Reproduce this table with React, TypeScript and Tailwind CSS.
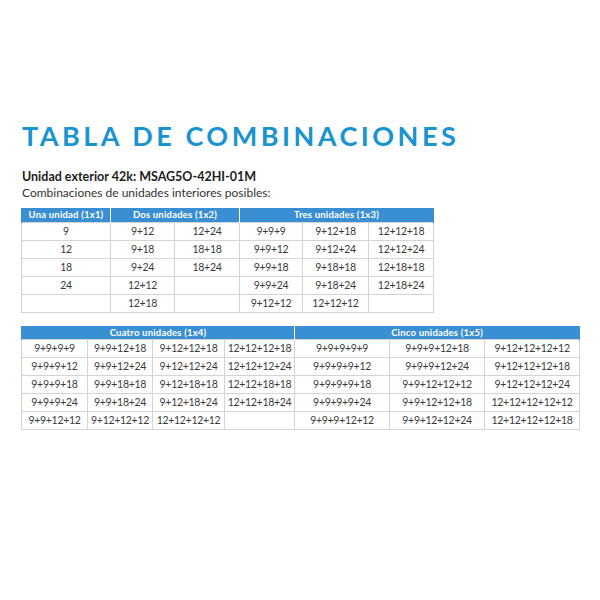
import React from "react";

const top = {
  widths: [89, 64, 65, 63, 66, 65],
  rows: [
    ["9", "9+12", "12+24", "9+9+9", "9+12+18", "12+12+18"],
    ["12", "9+18", "18+18", "9+9+12", "9+12+24", "12+12+24"],
    ["18", "9+24", "18+24", "9+9+18", "9+18+18", "12+18+18"],
    ["24", "12+12", "", "9+9+24", "9+18+24", "12+18+24"],
    ["", "12+18", "", "9+12+12", "12+12+12", ""],
  ],
};

const bottom = {
  widths: [66, 65, 72, 70, 95, 95, 95],
  rows: [
    ["9+9+9+9", "9+9+12+18", "9+12+12+18", "12+12+12+18", "9+9+9+9+9", "9+9+9+12+18", "9+12+12+12+12"],
    ["9+9+9+12", "9+9+12+24", "9+12+12+24", "12+12+12+24", "9+9+9+9+12", "9+9+9+12+24", "9+12+12+12+18"],
    ["9+9+9+18", "9+9+18+18", "9+12+18+18", "12+12+18+18", "9+9+9+9+18", "9+9+12+12+12", "9+12+12+12+24"],
    ["9+9+9+24", "9+9+18+24", "9+12+18+24", "12+12+18+24", "9+9+9+9+24", "9+9+12+12+18", "12+12+12+12+12"],
    ["9+9+12+12", "9+12+12+12", "12+12+12+12", "", "9+9+9+12+12", "9+9+12+12+24", "12+12+12+12+18"],
  ],
};

function Table({
  widths,
  headers,
  rows,
}: {
  widths: number[];
  headers: { label: string; span: number }[];
  rows: string[][];
}) {
  return (
    <table className="border-collapse table-fixed" style={{ width: widths.reduce((a, b) => a + b, 0) }}>
      <colgroup>
        {widths.map((w, i) => (
          <col key={i} style={{ width: w }} />
        ))}
      </colgroup>
      <thead>
        <tr className="h-[14px]">
          {headers.map((h, i) => (
            <th
              key={i}
              colSpan={h.span}
              className="bg-[#3a8fd2] text-white text-[9.5px] font-bold leading-[13px] tracking-[0.2px] p-0 border-x border-white first:border-l-[#3a8fd2] last:border-r-[#3a8fd2]"
            >
              {h.label}
            </th>
          ))}
        </tr>
      </thead>
      <tbody>
        {rows.map((r, i) => (
          <tr key={i} className="h-[18px]">
            {r.map((c, j) => (
              <td
                key={j}
                className="border border-[#d4d4d4] text-center text-[10.5px] leading-[17px] tracking-[-0.3px] text-[#3a3a3a] p-0 whitespace-nowrap"
              >
                {c}
              </td>
            ))}
          </tr>
        ))}
      </tbody>
    </table>
  );
}

export default function App() {
  return (
    <div
      className="w-[600px] h-[600px] bg-white pl-[21px] pt-[118px]"
      style={{ fontFamily: "Lato, 'Noto Sans', sans-serif" }}
    >
      <h1 className="text-[#1a93d1] text-[27px] font-bold leading-[36px] tracking-[3.5px] pl-[1px]">
        TABLA DE COMBINACIONES
      </h1>
      <div className="mt-[15px] pl-[1px] text-[#1c1c1c] leading-[16px]">
        <div className="font-bold text-[12.5px]">Unidad exterior 42k: MSAG5O-42HI-01M</div>
        <div className="text-[#333] text-[12px]">Combinaciones de unidades interiores posibles:</div>
      </div>
      <div className="mt-[7px]">
        <Table
          widths={top.widths}
          headers={[
            { label: "Una unidad (1x1)", span: 1 },
            { label: "Dos unidades (1x2)", span: 2 },
            { label: "Tres unidades (1x3)", span: 3 },
          ]}
          rows={top.rows}
        />
      </div>
      <div className="mt-[13px]">
        <Table
          widths={bottom.widths}
          headers={[
            { label: "Cuatro unidades (1x4)", span: 4 },
            { label: "Cinco unidades (1x5)", span: 3 },
          ]}
          rows={bottom.rows}
        />
      </div>
    </div>
  );
}
